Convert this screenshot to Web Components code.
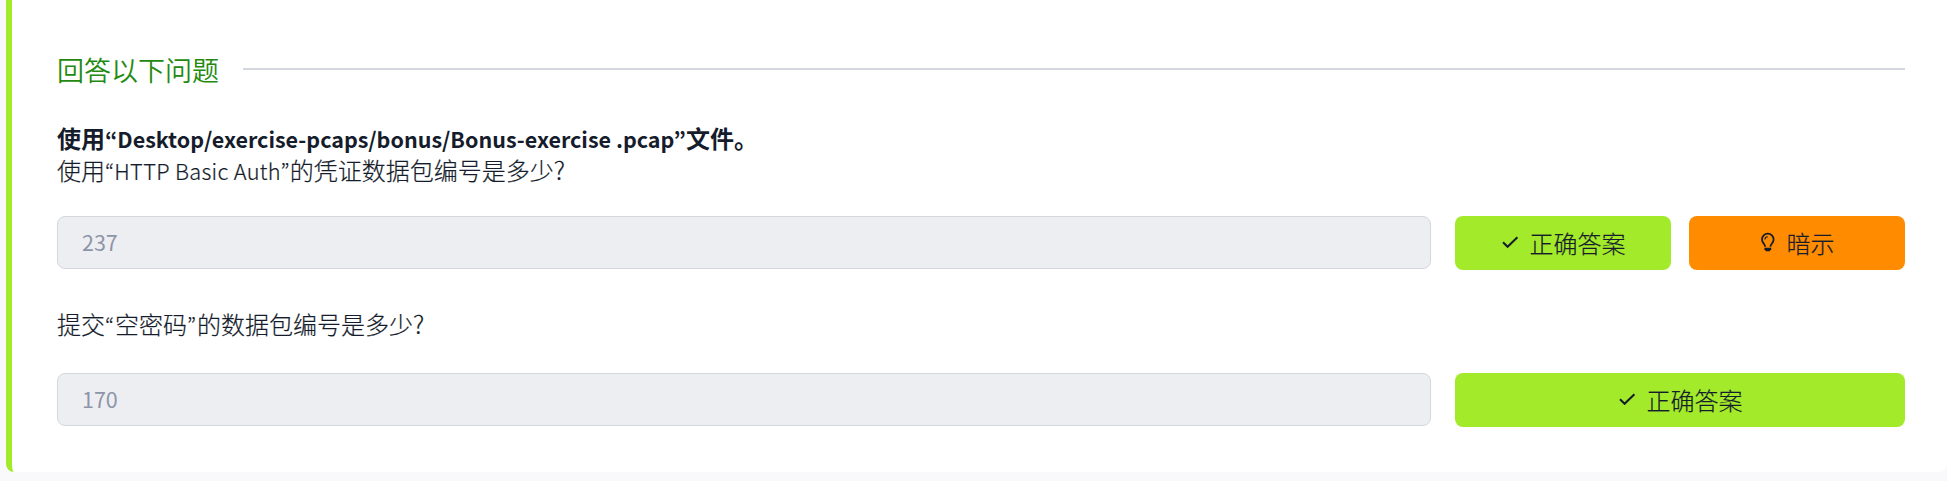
<!DOCTYPE html>
<html lang="zh-CN">
<head>
<meta charset="utf-8">
<title>回答以下问题</title>
<style>
  html, body { margin: 0; height: 100%; overflow: hidden; background: #f9f9fb; }
  body { font-family: "Noto Sans CJK SC", sans-serif; color: #151c2b; }
  b { font-weight: 700; --latin: 21.5px; --track: 0; -webkit-text-stroke: 0; }
</style>
</head>
<body>
<task-card>
  <section-title>回答以下问题</section-title>
  <question-text style="margin-top:35px"><b>使用<latin-text lang="en">“Desktop/exercise-pcaps/bonus/Bonus-exercise .pcap”</latin-text>文件。</b><br>使用<latin-text lang="en">“HTTP Basic Auth”</latin-text>的凭证数据包编号是多少<latin-text lang="en" style="--latin:25px">?</latin-text></question-text>
  <answer-row style="margin-top:30px" value="237">
    <action-button kind="correct">正确答案</action-button>
    <action-button kind="hint">暗示</action-button>
  </answer-row>
  <question-text style="margin-top:38px; --track:1px">提交<latin-text lang="en">“</latin-text>空密码<latin-text lang="en">”</latin-text>的数据包编号是多少<latin-text lang="en" style="--latin:25px">?</latin-text></question-text>
  <answer-row style="margin-top:33px" value="170">
    <action-button kind="correct">正确答案</action-button>
  </answer-row>
</task-card>
<script>
const define = (name, html, setup) => customElements.define(name, class extends HTMLElement {
  connectedCallback() {
    if (this.shadowRoot) return;
    this.attachShadow({ mode: 'open' }).innerHTML = html;
    if (setup) setup(this, this.shadowRoot);
  }
});

define('task-card', `<style>
  :host { display: block; box-sizing: border-box; height: 472px; margin-left: 6px; padding: 51px 42px 0 45px;
    background: #fff; border-left: 6px solid #a3ea2a; border-radius: 0 0 8px 8px; }
</style><slot></slot>`);

define('section-title', `<style>
  :host { display: flex; align-items: center; gap: 24px; height: 36px; }
  h2 { margin: 1px 0 0; font-size: 27px; line-height: 36px; font-weight: 350; color: #238a0f; white-space: nowrap; }
  i { flex: 1; height: 2px; background: #d4d7de; }
</style><h2><slot></slot></h2><i></i>`);

define('question-text', `<style>
  :host { display: block; font-size: 24px; line-height: 32px; font-weight: 300; white-space: nowrap; -webkit-text-stroke: 0.2px; }
</style><slot></slot>`);

/* Latin runs are set smaller, with proportional quotes. */
define('latin-text', `<style>
  :host { font-family: "Noto Sans CJK KR", sans-serif; font-size: var(--latin, 21.8px); line-height: 1;
    letter-spacing: var(--track, 0.3px); }
</style><slot></slot>`);

define('answer-row', `<style>
  :host { display: grid; grid-template-columns: 1374px 1fr; column-gap: 24px; height: 54px; }
  .field { box-sizing: border-box; height: 53px; padding: 0 24px 2px; display: flex; align-items: center;
    background: #edeef2; border: 1px solid #d4d7de; border-radius: 8px;
    font: 400 21.5px "Noto Sans CJK KR", sans-serif; color: #8e95a9; }
  .actions { display: flex; gap: 18px; }
</style><div class="field"></div><div class="actions"><slot></slot></div>`,
  (host, root) => { root.querySelector('.field').textContent = host.getAttribute('value'); });

const icons = {
  correct: `<svg width="18" height="18" viewBox="0 0 18 18"><path d="M2 9.2 6.6 13.8 16.4 4.3" fill="none" stroke="currentColor" stroke-width="2"/></svg>`,
  hint: `<svg width="16" height="20" viewBox="0 0 16 20" fill="none" stroke="currentColor"><path d="M5.2 14.7C5.2 12.3 2 11 2 7.5A5.8 5.8 0 0 1 13.6 7.5C13.6 11 10.4 12.3 10.4 14.7" stroke-width="1.8"/><path d="M4.9 7.5A3 3 0 0 1 7.8 4.8" stroke-width="1.1"/><path d="M4.4 15.7H11.2V17.3L9.6 19.3H6L4.4 17.3Z" fill="currentColor" stroke="none"/></svg>`
};
define('action-button', `<style>
  :host { flex: 1; display: flex; }
  button { flex: 1; display: flex; align-items: center; justify-content: center; padding: 0 0 2px; border: 0; border-radius: 8px;
    background: #a3ea2a; color: #151c2b; font: 300 24px "Noto Sans CJK SC", sans-serif; -webkit-text-stroke: 0.2px; }
  svg { margin-right: 11px; }
  :host([kind=hint]) button { background: #ff8b00; }
</style><button><span class="icon"></span><slot></slot></button>`,
  (host, root) => { root.querySelector('.icon').outerHTML = icons[host.getAttribute('kind')]; });
</script>
</body>
</html>
